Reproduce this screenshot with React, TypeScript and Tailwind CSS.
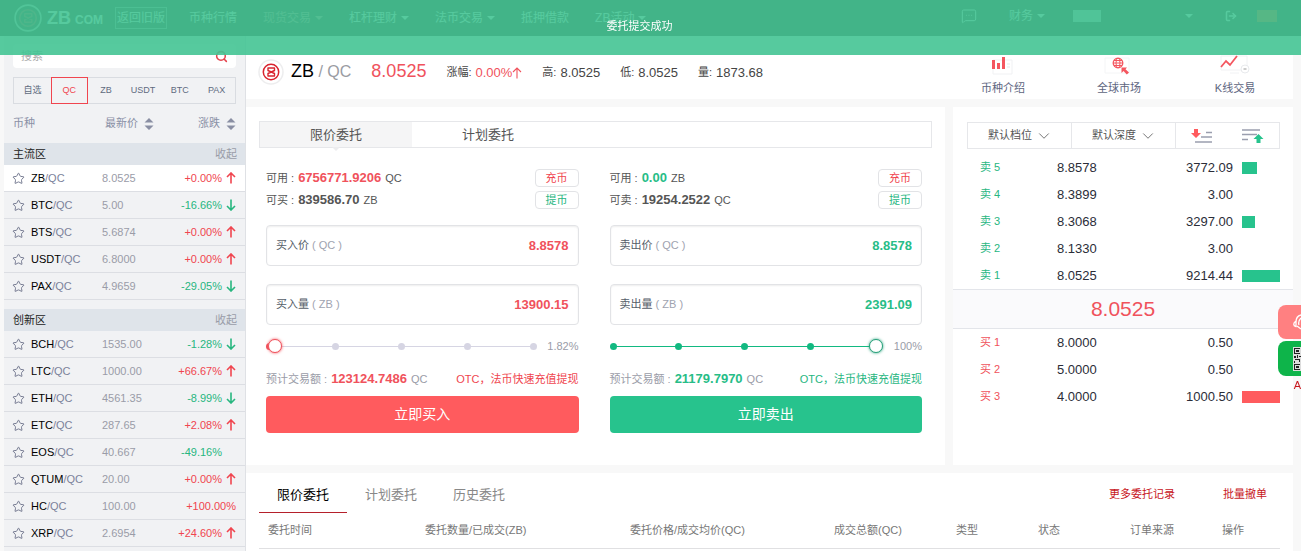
import { useState } from "react";
import { ChevronDown, LogOut, MessageSquareMore, Search, Star } from "lucide-react";

type Coin = { name: string; price: string; change: string; arrow?: boolean };

const MAIN_COINS: Coin[] = [
  { name: "ZB", price: "8.0525", change: "+0.00%", arrow: true },
  { name: "BTC", price: "5.00", change: "-16.66%", arrow: true },
  { name: "BTS", price: "5.6874", change: "+0.00%", arrow: true },
  { name: "USDT", price: "6.8000", change: "+0.00%", arrow: true },
  { name: "PAX", price: "4.9659", change: "-29.05%", arrow: true },
];

const NEW_COINS: Coin[] = [
  { name: "BCH", price: "1535.00", change: "-1.28%", arrow: true },
  { name: "LTC", price: "1000.00", change: "+66.67%", arrow: true },
  { name: "ETH", price: "4561.35", change: "-8.99%", arrow: true },
  { name: "ETC", price: "287.65", change: "+2.08%", arrow: true },
  { name: "EOS", price: "40.667", change: "-49.16%", arrow: false },
  { name: "QTUM", price: "20.00", change: "+0.00%", arrow: true },
  { name: "HC", price: "100.00", change: "+100.00%" },
  { name: "XRP", price: "2.6954", change: "+24.60%", arrow: true },
];

const SELLS = [
  { label: "卖 5", price: "8.8578", amount: "3772.09", bar: 40 },
  { label: "卖 4", price: "8.3899", amount: "3.00", bar: 0 },
  { label: "卖 3", price: "8.3068", amount: "3297.00", bar: 34 },
  { label: "卖 2", price: "8.1330", amount: "3.00", bar: 0 },
  { label: "卖 1", price: "8.0525", amount: "9214.44", bar: 100 },
];

const BUYS = [
  { label: "买 1", price: "8.0000", amount: "0.50", bar: 0 },
  { label: "买 2", price: "5.0000", amount: "0.50", bar: 0 },
  { label: "买 3", price: "4.0000", amount: "1000.50", bar: 100 },
];

function Caret() {
  return <span className="border-x-4 border-t-4 border-x-transparent border-t-current" />;
}

function CoinMark({ className }: { className: string }) {
  return (
    <svg className={className} viewBox="0 0 26 26" fill="none" stroke="currentColor">
      <circle cx="13" cy="13" r="12" stroke="#e9e9ea" strokeOpacity="0.8" strokeWidth="1.5" />
      <circle cx="13" cy="13" r="7.7" strokeWidth="1.5" />
      <path d="M10 9h6.500v2.500L10 14.500V17h6.500v-2.500L10 11.500z" strokeWidth="1.4" strokeLinejoin="round" />
    </svg>
  );
}

function Trend({ up, thin }: { up: boolean; thin?: boolean }) {
  return (
    <svg className="h-3 w-[10px]" viewBox="0 0 10 12" fill="none" stroke="currentColor" strokeWidth={thin ? 1.1 : 1.6}>
      <path d={up ? "M5 11.5V1M1 5l4-4 4 4" : "M5 .5V11M1 7l4 4 4-4"} />
    </svg>
  );
}

function TopBar() {
  return (
    <header className="flex h-9 items-start justify-between bg-[#3a2526] pt-1 pl-3 pr-6 text-[12px] text-white">
      <div className="flex items-center">
        <a href="#" className="flex items-center">
          <CoinMark className="h-7 w-8 text-[#a33]" />
          <span className="ml-[3px] text-[18px] leading-6 font-bold">ZB</span>
          <span className="ml-1 pt-1 text-[12px] leading-5 font-bold">COM</span>
        </a>
        <a href="#" className="ml-3 border border-white/50 px-px leading-5">返回旧版</a>
        <nav className="ml-[22px] flex gap-[26px] leading-6">
          <a href="#">币种行情</a>
          <a href="#" className="flex items-center gap-1 text-[#c88]">现货交易<Caret /></a>
          <a href="#" className="flex items-center gap-1">杠杆理财<Caret /></a>
          <a href="#" className="flex items-center gap-1">法币交易<Caret /></a>
          <a href="#">抵押借款</a>
          <a href="#" className="flex items-center gap-1">ZB活动<Caret /></a>
        </nav>
      </div>
      <div className="flex h-6 items-center">
        <button type="button" aria-label="消息"><MessageSquareMore className="h-4 w-4" strokeWidth={1.5} /></button>
        <a href="#" className="ml-8 flex items-center gap-1">财务<Caret /></a>
        <span className="ml-7 h-3 w-7 bg-white/70" />
        <span className="ml-[84px] flex"><Caret /></span>
        <button type="button" aria-label="退出" className="ml-8"><LogOut className="h-3 w-3" strokeWidth={3} /></button>
        <span className="ml-5 h-3 w-5 bg-[#f40]" />
      </div>
    </header>
  );
}

function Sorter() {
  return (
    <svg className="h-3 w-[10px]" viewBox="0 0 10 12" fill="#8a8fa3">
      <path d="M5 0l4.500 4.500h-9zM5 12l4.500-4.500h-9z" />
    </svg>
  );
}

function CoinRow({ coin, active }: { coin: Coin; active?: boolean }) {
  const up = coin.change.startsWith("+");
  const tone = up ? "text-[#f0454f]" : "text-[#27b67f]";
  return (
    <li className={`flex h-[27px] items-center border-b border-[#dcdee3] pl-2 pr-[9px] text-[11px] ${active ? "bg-white" : ""}`}>
      <button type="button" aria-label={`收藏 ${coin.name}`} className="w-[19px]">
        <Star className="h-[13px] w-[13px] text-[#6c7189]" strokeWidth={1.7} />
      </button>
      <span className="w-[71px] text-[#7c829b]"><b className="font-normal text-black">{coin.name}</b>/QC</span>
      <span className="flex-1 text-[#9a9ca8]">{coin.price}</span>
      <span className={tone}>{coin.change}</span>
      {coin.arrow !== undefined && (
        <span className={`flex w-[14px] justify-end ${tone}`}>{coin.arrow && <Trend up={up} />}</span>
      )}
    </li>
  );
}

function Zone({ title, coins, first }: { title: string; coins: Coin[]; first?: boolean }) {
  return (
    <section>
      <div className="flex h-[22px] items-center justify-between bg-[#dfe4ea] pl-[9px] pr-2 text-[11px]">
        <h2 className="text-[#222]">{title}</h2>
        <button type="button" className="text-[#9a9ca8]">收起</button>
      </div>
      <ul>
        {coins.map((c, i) => <CoinRow key={c.name} coin={c} active={first && i === 0} />)}
      </ul>
    </section>
  );
}

function Sidebar() {
  return (
    <aside className="ml-1 w-[242px] shrink-0 border-r border-[#dfe1e5] bg-[#f1f2f4]">
      <div className="px-[9px] pt-2">
        <label className="flex h-6 items-center rounded-sm bg-white px-2">
          <input type="text" placeholder="搜索" aria-label="搜索" className="min-w-0 flex-1 text-[11px] leading-4 outline-none placeholder:text-[#aaa]" />
          <Search className="h-[13px] w-[13px] text-[#e5434c]" strokeWidth={2.8} />
        </label>
        <div className="mt-[9px] grid h-[27px] grid-cols-6 border border-[#d9dce1] text-[9px] text-[#5f6b80]">
          {["自选", "QC", "ZB", "USDT", "BTC", "PAX"].map((t) => (
            <button
              key={t}
              type="button"
              className={t === "QC" ? "-my-px border border-solid border-[#f0454f] text-[#f0454f]" : ""}
            >
              {t}
            </button>
          ))}
        </div>
        <div className="flex h-[39px] items-center text-[11px] text-[#8a90a6]">
          <span className="w-[92px]">币种</span>
          <span className="flex flex-1 items-center gap-[6px]">最新价<Sorter /></span>
          <span className="flex items-center gap-[6px]">涨跌<Sorter /></span>
        </div>
      </div>
      <div className="flex flex-col gap-[9px]">
        <Zone title="主流区" coins={MAIN_COINS} first />
        <Zone title="创新区" coins={NEW_COINS} />
      </div>
    </aside>
  );
}

function Ticker() {
  return (
    <section className="flex h-[55px] items-center bg-white pl-3 text-[11px] text-[#444]">
      <CoinMark className="h-[26px] w-[26px] text-[#d9232e]" />
      <h1 className="ml-[7px] text-[16px] text-[#9a9ca3]">
        <span className="text-[18px] text-black">ZB</span> / QC
      </h1>
      <strong className="ml-5 text-[18px] font-normal text-[#f0525c]">8.0525</strong>
      <div className="ml-5 flex gap-5 pt-0.5">
        <span className="flex items-center">
          涨幅:
          <span className="ml-1 flex items-center text-[13px] text-[#f0525c]">0.00%<Trend up thin /></span>
        </span>
        <span className="flex items-center gap-1">高:<span className="text-[13px]">8.0525</span></span>
        <span className="flex items-center gap-1">低:<span className="text-[13px]">8.0525</span></span>
        <span className="flex items-center gap-1">量:<span className="text-[13px]">1873.68</span></span>
      </div>
      <nav className="ml-auto grid w-[348px] grid-cols-3 self-end pb-[3px] text-[#5d6580]">
        <a href="#" className="flex flex-col items-center">
          <svg className="h-7 w-8" viewBox="0 0 32 28">
            <path d="M6 8h19v14H6z" fill="#fff" stroke="#f0f1f3" />
            <path d="M5 8h3v9H5zM10 11h3v6h-3zM15 5h3v12h-3z" fill="#f4565f" />
            <path d="M20 12h3M20 15h3" stroke="#e5e7ea" />
          </svg>
          <span className="leading-4">币种介绍</span>
        </a>
        <a href="#" className="flex flex-col items-center">
          <svg className="h-7 w-8" viewBox="0 0 32 28" fill="none" stroke="#f4565f">
            <path d="M2 6h24v15H2z" stroke="#f4f5f6" />
            <circle cx="15" cy="11" r="4.8" strokeWidth="1.3" />
            <ellipse cx="15" cy="11" rx="2" ry="4.8" />
            <path d="M10 11h10M11 8.5h8M11 13.5h8" />
            <path d="M18.500 15.500h5.500l-1.500 1.800 3.500 3.200-2.200 2-3.300-3.500-2 2z" fill="#f4565f" stroke="none" />
          </svg>
          <span className="leading-4">全球市场</span>
        </a>
        <a href="#" className="flex flex-col items-center">
          <svg className="h-7 w-8" viewBox="0 0 32 28" fill="none">
            <path d="M2 4h26v14H2zM11 21h9" stroke="#f1f2f4" />
            <circle cx="26" cy="17" r="4" fill="#fff" stroke="#e8eaed" />
            <path d="M24.5 17h3" stroke="#999" />
            <path d="M2 15l5-6 4 4 7-9" stroke="#f4565f" strokeWidth="1.8" />
          </svg>
          <span className="leading-4">K线交易</span>
        </a>
      </nav>
    </section>
  );
}

type SideProps = {
  side: "buy" | "sell";
  available: string;
  availableUnit: string;
  canLabel: string;
  can: string;
  canUnit: string;
  action: string;
  price: string;
  amount: string;
  percent: number;
  total: string;
};

function Field({ name, unit, value, tone }: { name: string; unit: string; value: string; tone: string }) {
  return (
    <label className="flex h-[41px] items-center rounded-sm border border-[#e2e3e6] px-[9px] text-[11px] shadow-[inset_0_1px_2px_#eeeeee]">
      <span className="shrink-0 text-[#555d68]">{name}<span className="text-[#a0a3b0]"> ( {unit} )</span></span>
      <input type="text" defaultValue={value} className={`min-w-0 flex-1 text-right text-[13px] leading-5 font-bold outline-none ${tone}`} />
    </label>
  );
}

function TradeSide(p: SideProps) {
  const [percent, setPercent] = useState(p.percent);
  const buy = p.side === "buy";
  const tone = buy ? "text-[#f0525c]" : "text-[#27bd87]";
  const dot = buy ? "bg-[#d6d5e3]" : "bg-[#12b981]";
  return (
    <form className="flex flex-col text-[11px]">
      <div className="flex h-[22px] items-center text-[#555]">
        <span className="flex flex-1 items-center gap-1">可用 :<b className={`text-[13px] ${tone}`}>{p.available}</b>{p.availableUnit}</span>
        <button type="button" className="h-[18px] w-11 rounded-sm border border-[#e2e3e6] text-[#f0454f]">充币</button>
      </div>
      <div className="flex h-[22px] items-center text-[#555]">
        <span className="flex flex-1 items-center gap-1">{p.canLabel} :<b className="text-[13px]">{p.can}</b>{p.canUnit}</span>
        <button type="button" className="h-[18px] w-11 rounded-sm border border-[#e2e3e6] text-[#27b67f]">提币</button>
      </div>
      <div className="mt-[14px] flex flex-col gap-[18px]">
        <Field name={`${p.action}价`} unit="QC" value={p.price} tone={tone} />
        <Field name={`${p.action}量`} unit="ZB" value={p.amount} tone={tone} />
      </div>
      <div className="mt-[11px] flex h-5 items-center">
        <div className="relative flex h-5 flex-1 items-center justify-between">
          <span className={`absolute inset-x-1 h-px ${dot}`} />
          {[0, 25, 50, 75, 100].map((n) => (
            <span key={n} className={`h-[7px] w-[7px] rounded-full ${buy && n === 0 ? "bg-[#f0525c]" : dot}`} />
          ))}
          <input
            type="range"
            min={0}
            max={100}
            step="any"
            value={percent}
            onChange={(e) => setPercent(Number(e.target.value))}
            aria-label={`${p.action}比例`}
            className={`absolute -inset-x-[3px] h-5 w-[calc(100%+6px)] cursor-pointer appearance-none bg-transparent [&::-webkit-slider-thumb]:h-[14px] [&::-webkit-slider-thumb]:w-[14px] [&::-webkit-slider-thumb]:appearance-none [&::-webkit-slider-thumb]:rounded-full [&::-webkit-slider-thumb]:border [&::-webkit-slider-thumb]:bg-white ${
              buy
                ? "[&::-webkit-slider-thumb]:border-[#f0525c] [&::-webkit-slider-thumb]:shadow-[0_0_3px_#f0525c]"
                : "[&::-webkit-slider-thumb]:border-[#27a07a] [&::-webkit-slider-thumb]:shadow-[0_0_3px_#27a07a]"
            }`}
          />
        </div>
        <span className="w-[42px] text-right text-[#9a9ca8]">{Number(percent.toFixed(2))}%</span>
      </div>
      <div className="mt-[13px] flex h-5 items-center justify-between text-[#9a9ca8]">
        <span className="flex items-center gap-1">预计交易额 :<b className={`text-[13px] ${tone}`}>{p.total}</b>QC</span>
        <a href="#" className={buy ? "text-[#f0454f]" : "text-[#27b67f]"}>OTC，法币快速充值提现</a>
      </div>
      <button type="button" className={`mt-[7px] h-[37px] rounded-sm text-[14px] text-white ${buy ? "bg-[#ff5b5e]" : "bg-[#27c38d]"}`}>立即{p.action}</button>
    </form>
  );
}

function TradePanel() {
  return (
    <section className="flex-1 bg-white pb-8">
      <div className="mx-[13px] mt-[14px] flex h-[27px] border border-[#e6e7ea] text-[13px] text-[#555]">
        <button type="button" className="relative w-[152px] bg-[#f5f5f6]">
          限价委托
          <span className="absolute top-full left-1/2 -translate-x-1/2 border-x-4 border-t-4 border-x-transparent border-t-[#ececee]" />
        </button>
        <button type="button" className="w-[152px]">计划委托</button>
      </div>
      <div className="mt-[19px] grid grid-cols-2 gap-[31px] pr-[23px] pl-5">
        <TradeSide side="buy" available="6756771.9206" availableUnit="QC" canLabel="可买" can="839586.70" canUnit="ZB" action="买入" price="8.8578" amount="13900.15" percent={1.82} total="123124.7486" />
        <TradeSide side="sell" available="0.00" availableUnit="ZB" canLabel="可卖" can="19254.2522" canUnit="QC" action="卖出" price="8.8578" amount="2391.09" percent={100} total="21179.7970" />
      </div>
    </section>
  );
}

function BookTable({ rows, side }: { rows: typeof SELLS; side: "buy" | "sell" }) {
  return (
    <table className="ml-[27px] w-[300px] table-fixed text-[13px] text-[#2b2d38]">
      <tbody>
        {rows.map((r) => (
          <tr key={r.label} className="h-[27px]">
            <td className={`w-[77px] text-[11px] ${side === "buy" ? "text-[#f0525c]" : "text-[#27b67f]"}`}>{r.label}</td>
            <td className="w-[88px]">{r.price}</td>
            <td className="w-[88px] text-right">{r.amount}</td>
            <td className="pl-[9px]">
              <div className={`h-3 ${side === "buy" ? "bg-[#ff5b5e]" : "bg-[#27c38d]"}`} style={{ width: `${r.bar}%` }} />
            </td>
          </tr>
        ))}
      </tbody>
    </table>
  );
}

function BookSelect({ label }: { label: string }) {
  return (
    <div className="relative flex w-[104px] items-center border-r border-[#e6e7ea]">
      <select aria-label={label} className="h-full w-full appearance-none pl-5 text-[11px] text-[#555] outline-none">
        <option>{label}</option>
      </select>
      <ChevronDown className="pointer-events-none absolute right-[18px] h-[18px] w-[18px] text-[#666]" strokeWidth={1.2} />
    </div>
  );
}

function OrderBook() {
  return (
    <section className="w-[340px] shrink-0 bg-white">
      <div className="mt-[15px] mr-[13px] ml-[14px] flex h-[27px] border border-[#e6e7ea]">
        <BookSelect label="默认档位" />
        <BookSelect label="默认深度" />
        <div className="flex flex-1 items-center justify-around">
          <button type="button" aria-label="卖单">
            <svg className="h-4 w-[22px]" viewBox="0 0 22 16">
              <path d="M3 1h4v4h3L5 10 0 5h3z" fill="#ff5b5e" />
              <path d="M15 4.5h6M10 9h11M4 14h17" stroke="#9a9eae" strokeWidth="1.6" />
            </svg>
          </button>
          <button type="button" aria-label="买单">
            <svg className="h-4 w-[22px]" viewBox="0 0 22 16">
              <path d="M0 2h18M0 6.5h15M0 11.5h6" stroke="#9a9eae" strokeWidth="1.6" />
              <path d="M14.5 15h4v-4H21.5L16.5 6l-5 5h3z" fill="#27c38d" />
            </svg>
          </button>
        </div>
      </div>
      <div className="mt-[5px]">
        <BookTable rows={SELLS} side="sell" />
      </div>
      <div className="flex h-10 items-center justify-center border-y border-[#e3e5ea] bg-[#fafafc] text-[21px] text-[#f0525c]">8.0525</div>
      <BookTable rows={BUYS} side="buy" />
    </section>
  );
}

const COLUMNS = [
  { name: "委托时间", width: "w-[157px]" },
  { name: "委托数量/已成交(ZB)", width: "w-[205px]" },
  { name: "委托价格/成交均价(QC)", width: "w-[204px]" },
  { name: "成交总额(QC)", width: "w-[122px]" },
  { name: "类型", width: "w-[82px]" },
  { name: "状态", width: "w-[92px]" },
  { name: "订单来源", width: "w-[92px]" },
  { name: "操作", width: "" },
];

function Orders() {
  return (
    <section className="flex-1 bg-white px-[13px]">
      <div className="flex h-10 items-stretch text-[13px] text-[#888]">
        <button type="button" className="w-[88px] border-b border-[#b5202b] pt-1 text-black">限价委托</button>
        <button type="button" className="w-[88px] pt-1">计划委托</button>
        <button type="button" className="w-[88px] pt-1">历史委托</button>
        <div className="ml-auto flex items-center gap-12 pt-0.5 pr-[13px] text-[11px] text-[#c8161d]">
          <a href="#">更多委托记录</a>
          <a href="#">批量撤单</a>
        </div>
      </div>
      <table className="w-full table-fixed border-b border-[#e0e0e2] text-left text-[11px] text-[#777]">
        <thead>
          <tr className="h-[35px]">
            {COLUMNS.map((c) => <th key={c.name} className={`pl-[9px] font-normal ${c.width}`}>{c.name}</th>)}
          </tr>
        </thead>
      </table>
    </section>
  );
}

function FloatingTools() {
  return (
    <div className="fixed top-[305px] right-0 w-[23px] overflow-hidden">
      <button type="button" aria-label="客服" className="flex h-[34px] w-full items-center justify-end rounded-l-lg bg-[#ff8081]">
        <svg className="h-4 w-2" viewBox="0 0 8 16" fill="none" stroke="#fff">
          <path d="M8 1C4 2 3 5 3 8M3 7C0 9 0 12 3 12.5V7M4 12l4 3M8 4C6 6 5 8 6 11" strokeWidth="1.3" />
        </svg>
      </button>
      <button type="button" aria-label="二维码" className="mt-0.5 flex h-[35px] w-full items-center justify-end rounded-l-lg bg-[#0eb44a]">
        <svg className="h-6 w-2" viewBox="0 0 8 24">
          <path d="M0 0h8v24H0z" fill="#ddd" />
          <path d="M1 1h6v1H2v4h5v1H1zM3 3h3v2H3zM1 9h2v2H1zM4 8h1v3H4zM6 9h2v1H6zM2 12h4v1H2zM1 14h1v2H1zM6 12h1v3H6zM1 17h6v1H2v4h5v1H1zM3 19h3v2H3z" fill="#222" />
        </svg>
      </button>
      <span className="block text-right text-[11px] leading-[18px] text-[#c8161d]">A</span>
    </div>
  );
}

export default function App() {
  return (
    <div className="flex min-h-screen flex-col bg-[#f8f8f8] font-['Liberation_Sans','Noto_Sans_CJK_SC',sans-serif]">
      <TopBar />
      {/* Toast */}
      <div role="status" className="fixed inset-x-0 top-0 z-10 flex h-[55px] items-center justify-center bg-[#44c493]/90 pr-[22px] pb-0.5 text-[11px] text-white">
        委托提交成功
      </div>
      <div className="flex flex-1">
        <Sidebar />
        <main className="flex min-w-0 flex-1 flex-col gap-2 pt-2 pr-2">
          <Ticker />
          <div className="flex gap-2">
            <TradePanel />
            <OrderBook />
          </div>
          <Orders />
        </main>
      </div>
      <FloatingTools />
    </div>
  );
}
